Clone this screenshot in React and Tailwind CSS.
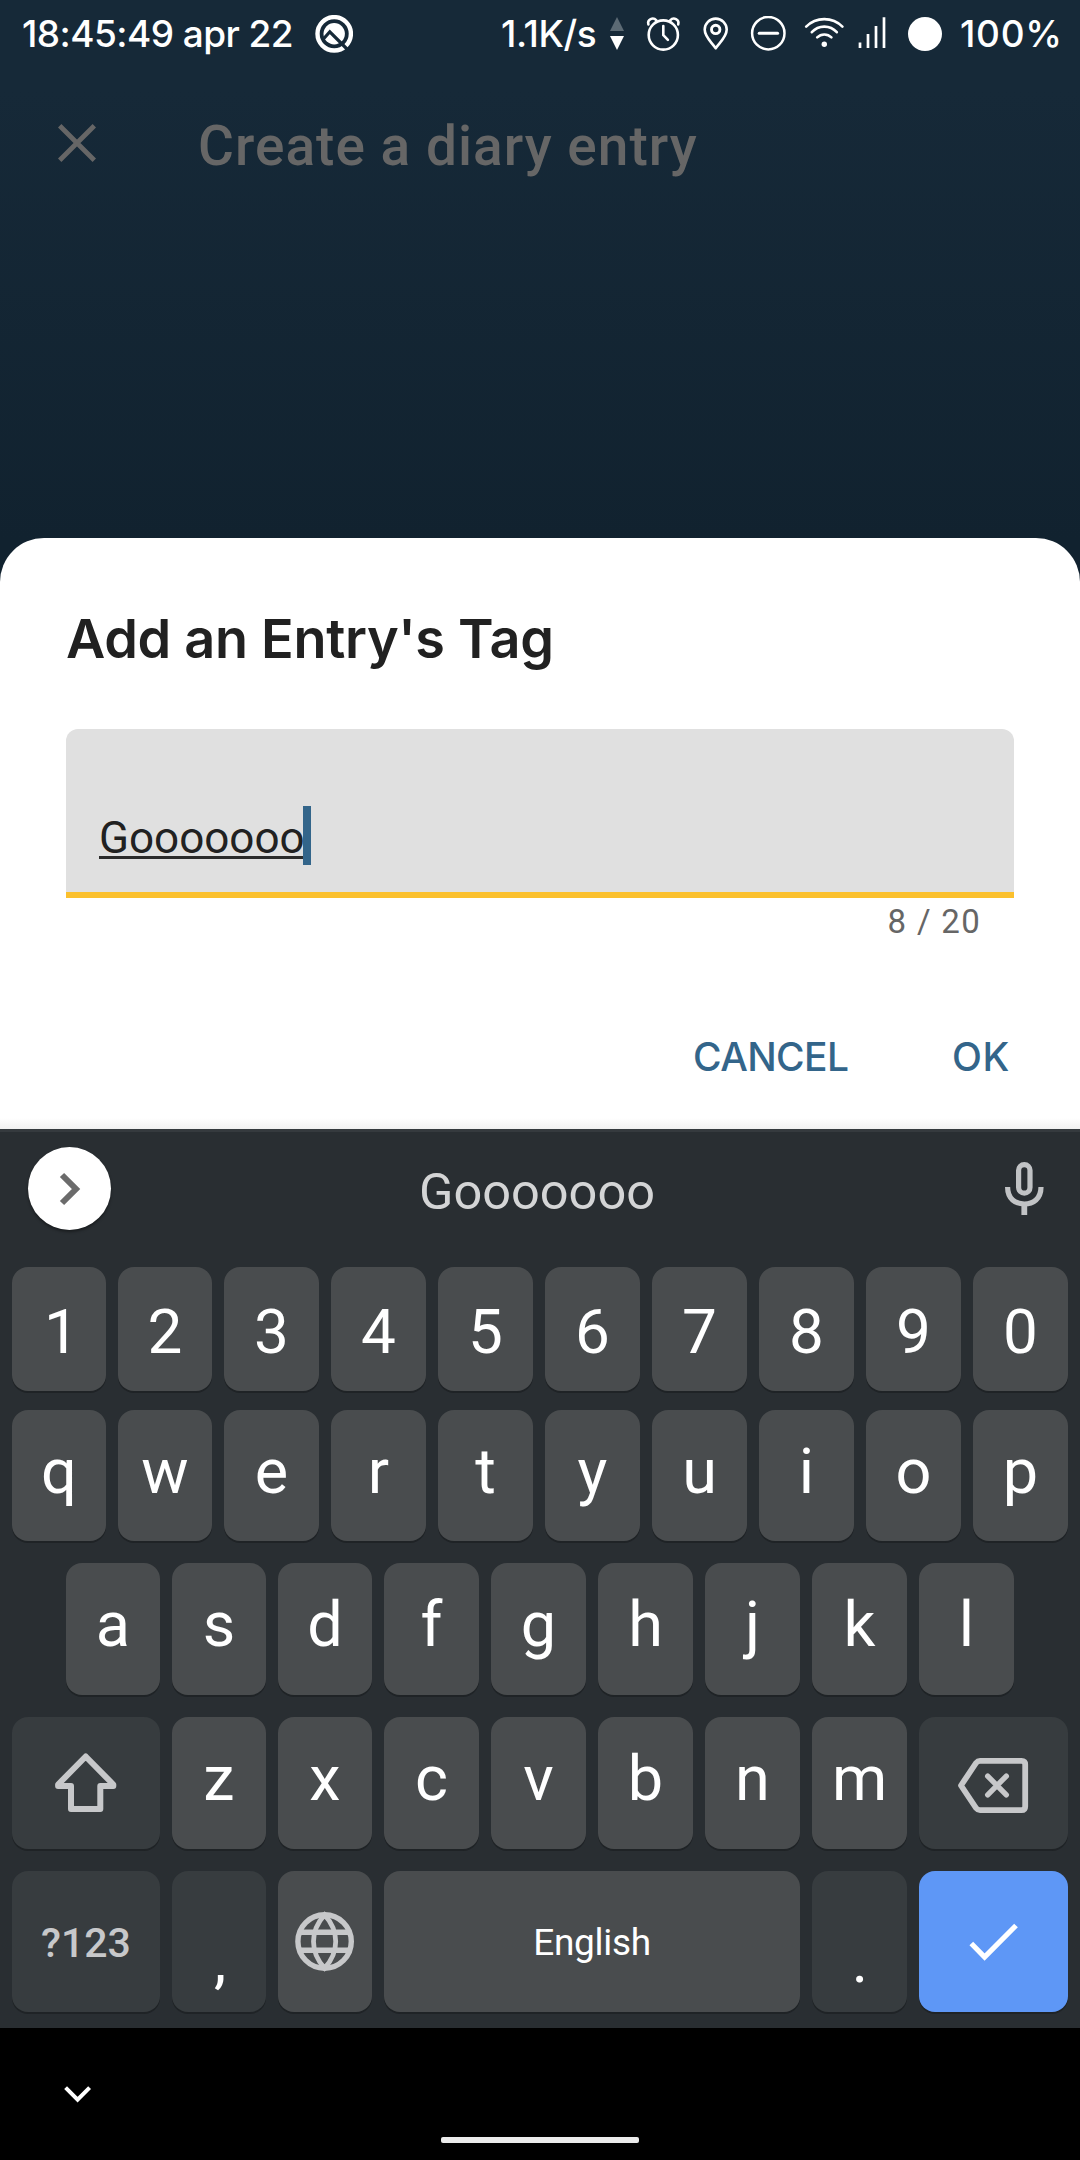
import React from "react";

const SANS = "font-['Inter',sans-serif]";

function Icon({ w, h, children, className = "", ...rest }) {
  return (
    <svg
      width={w}
      height={h}
      viewBox={`0 0 ${w} ${h}`}
      fill="none"
      stroke="currentColor"
      className={`shrink-0 ${className}`}
      {...rest}
    >
      {children}
    </svg>
  );
}

function StatusBar() {
  return (
    <div className={`flex h-[67px] items-center pl-[22px] text-[37px] leading-[44px] font-medium whitespace-nowrap text-white ${SANS}`}>
      <span className="w-[293px] tracking-[-0.55px]">18:45:49 apr 22</span>
      <Icon w={38} h={38}>
        <circle cx="19.2" cy="18.8" r="16.7" strokeWidth="4.4" />
        <circle cx="19.2" cy="18.8" r="10.7" fill="currentColor" stroke="none" />
        <path d="M8 24.5 L14.8 16.8 L34.5 36.5" stroke="#162938" strokeWidth="3.2" />
      </Icon>
      <span className="ml-[148px] w-[109px] tracking-[-0.4px]">1.1K/s</span>
      <Icon w={14} h={34} stroke="none" fill="currentColor">
        <path d="M7 0 L14 14 H0 Z" fill="#5c6a74" />
        <path d="M7 33 L0 19 H14 Z" />
      </Icon>
      <Icon w={36} h={38} strokeWidth="2.6" strokeLinecap="round" strokeLinejoin="round" className="ml-[21px]">
        <circle cx="18.3" cy="20" r="14.6" />
        <path d="M18.3 11 V20.2 L22.9 24.8" />
        <path d="M3.4 9.4 C2 4.4 8 1.6 11.4 5.4" />
        <path d="M33.2 9.4 C34.6 4.4 28.6 1.6 25.2 5.4" />
      </Icon>
      <Icon w={26} h={34} strokeWidth="2.6" strokeLinejoin="round" className="ml-[22px]">
        <path d="M12.7 31.3 C8.4 25 1.7 20 1.7 12.6 A11 11 0 0 1 23.7 12.6 C23.7 20 17 25 12.7 31.3 Z" />
        <circle cx="12.7" cy="12.4" r="4.2" strokeWidth="2.9" />
      </Icon>
      <Icon w={36} h={36} strokeWidth="2.5" className="ml-[21px]">
        <circle cx="18.3" cy="17.2" r="16.2" />
        <path d="M9.2 17.2 H27.6" strokeWidth="3" strokeLinecap="round" />
      </Icon>
      <Icon w={40} h={34} strokeWidth="2.6" strokeLinecap="round" className="ml-[18px]">
        <path d="M2.2 9.6 A25.6 25.6 0 0 1 38.4 9.6" />
        <path d="M7.8 15.2 A16.8 16.8 0 0 1 32.8 15.2" />
        <path d="M13.2 20.4 A10 10 0 0 1 27.4 20.4" />
        <circle cx="20.3" cy="27.2" r="2.7" fill="currentColor" stroke="none" />
      </Icon>
      <Icon w={28} h={34} strokeWidth="2.7" className="ml-[14px]">
        <path d="M2 31 V25.6 M10 31 V17 M18 31 V9 M26 31 V0.3" />
      </Icon>
      <span className="ml-[22px] size-[34px] shrink-0 rounded-full bg-white" />
      <span className="ml-[18px] tracking-[0.7px]">100%</span>
    </div>
  );
}

function AppBar() {
  return (
    <div className="flex h-[154px] items-start pl-[58px] text-[#666666]">
      <Icon w={38} h={38} strokeWidth="4.8" className="mt-[57px]">
        <path d="M1.7 1.7 L36.3 36.3 M36.3 1.7 L1.7 36.3" />
      </Icon>
      <h1 className="mt-[47px] ml-[102px] text-[55px] leading-[64px] font-medium tracking-[1.03px] whitespace-nowrap">
        Create a diary entry
      </h1>
    </div>
  );
}

function TagSheet() {
  return (
    <section className="flex h-[591px] flex-col rounded-t-[44px] bg-white bg-[linear-gradient(to_bottom,transparent_580px,#f1f1f1_591px)] px-[66px] pt-[69px]">
      <h2 className={`h-[64px] text-[54px] leading-[64px] font-semibold tracking-[-0.3px] whitespace-nowrap text-[#212121] ${SANS}`}>
        Add an Entry&apos;s Tag
      </h2>
      <div className="mt-[58px] flex h-[169px] rounded-t-[12px] border-b-[6px] border-[#fbc02d] bg-[#e0e0e0] pt-[77px] pl-[33px]">
        <span className="mt-[12px] h-[41px] w-[204px] border-b-[3px] border-[#2b2b2b] text-[44px] leading-[40px] whitespace-nowrap text-[#212121]">
          Gooooooo
        </span>
        <span className="h-[59px] w-[8px] bg-[#33658a]" />
      </div>
      <div className="mt-[4px] pr-[33px] text-right text-[33px] leading-[40px] tracking-[1.3px] text-[#666666]">8 / 20</div>
      <div className={`mt-[91px] flex text-[39px] leading-[48px] font-medium text-[#33658a] ${SANS}`}>
        <button className="ml-[627px] w-[259px] text-left tracking-[-0.6px]">CANCEL</button>
        <button className="text-left tracking-[0.5px]">OK</button>
      </div>
    </section>
  );
}

const KEY = "flex items-center justify-center rounded-[16px] shadow-[0_2px_0_#1f2326]";

function Key({ className = "", children, tone = "bg-[#494c4e] text-white", size = "w-[95px]" }) {
  return <div className={`${KEY} ${size} ${tone} ${className}`}>{children}</div>;
}

/* The leading keys of a row are one pixel narrower than the rest. */
function Letters({ chars, narrow, className }) {
  return [...chars].map((c, i) => (
    <Key key={c} size={i < narrow ? "w-[94px]" : "w-[95px]"} className={`${className} ${c === "1" ? "pl-[5px]" : ""}`}>
      {c}
    </Key>
  ));
}

const DARK = "bg-[#373c3f] text-[#c7c8ca]";

function Keyboard() {
  return (
    <section className="h-[899px] border-t-[3px] border-[#353a3e] bg-[#292e32]">
      <div className="flex h-[135px] items-start pl-[28px]">
        <div className="mt-[15px] size-[83px] rounded-full bg-white text-[#6b6b6b] shadow-[0_2px_3px_rgba(0,0,0,0.4)]">
          <Icon w={83} h={83} strokeWidth="6">
            <path d="M34 28 L48 42 L34 56" />
          </Icon>
        </div>
        <span className="mt-[30px] ml-[308px] w-[586px] text-[50.5px] leading-[60px] text-[#d4d5d6]">Gooooooo</span>
        <Icon w={39} h={54} strokeWidth="5.2" className="mt-[30px] text-[#c1c3c5]">
          <rect x="13.6" y="2.6" width="11.4" height="28.6" rx="5.7" />
          <path d="M2.6 25 C2.6 37 10.5 42 19.3 42 S36 37 36 25" />
          <path d="M19.3 41 V53" strokeWidth="5.8" />
        </Icon>
      </div>

      <div className="flex h-[124px] gap-[12px] px-[12px] text-[62px]">
        <Letters chars="1234567890" narrow={2} className="pt-[5px]" />
      </div>
      <div className="mt-[19px] flex h-[131px] gap-[12px] px-[12px] text-[63px]">
        <Letters chars="qwertyuiop" narrow={2} className="pb-[6px]" />
      </div>
      <div className="mt-[22px] flex h-[132px] gap-[12px] px-[66px] text-[63px]">
        <Letters chars="asdfghjkl" narrow={3} className="pb-[7px]" />
      </div>
      <div className="mt-[22px] flex h-[132px] gap-[12px] px-[12px] text-[63px]">
        <Key size="w-[148px]" tone={DARK}>
          <Icon w={148} h={132} strokeWidth="6" strokeLinejoin="round">
            <path d="M73.7 39.5 L101.3 67.5 V69 H88.3 V92 H59 V69 H46.1 V67.5 Z" />
          </Icon>
        </Key>
        <Letters chars="zxcvbnm" narrow={2} className="pb-[7px]" />
        <Key size="w-[149px]" tone={DARK}>
          <Icon w={149} h={132} strokeWidth="5.8" strokeLinejoin="round">
            <path d="M42 68.5 L57 46 Q58.8 43.8 61 43.8 H102.5 Q106.2 43.8 106.2 47.5 V89.5 Q106.2 93.2 102.5 93.2 H61 Q58.8 93.2 57 91 Z" />
            <path d="M68.7 59.2 L87.3 77.8 M87.3 59.2 L68.7 77.8" strokeLinecap="round" strokeWidth="5.4" />
          </Icon>
        </Key>
      </div>
      <div className="mt-[22px] flex h-[141px] gap-[12px] px-[12px] text-[62px]">
        <Key size="w-[148px]" tone={DARK} className="pt-[4px] text-[41px] font-medium">?123</Key>
        <Key size="w-[94px]" tone="bg-[#373c3f] text-white" className="pt-[38px] pl-[2px]">,</Key>
        <Key size="w-[94px]" tone="bg-[#494c4e] text-[#c7c8ca]">
          <Icon w={94} h={141} strokeWidth="5.4">
            <circle cx="46.6" cy="70.5" r="26.7" />
            <path d="M22 61.3 H71.2 M22 79.3 H71.2" />
            <path d="M46.6 43.8 C31.8 60 31.8 81 46.6 97.2 C61.4 81 61.4 60 46.6 43.8 Z" strokeWidth="4.8" />
          </Icon>
        </Key>
        <Key size="w-[416px]" className="pt-[3px] text-[37px] tracking-[-0.3px]">English</Key>
        <Key size="w-[95px]" tone="bg-[#373c3f] text-white" className="pt-[37px] pl-px">.</Key>
        <Key size="w-[149px]" tone="bg-[#5e97f6] text-white">
          <Icon w={149} h={141} strokeWidth="5.2">
            <path d="M52.3 72.5 L65.6 86 L97 54.5" />
          </Icon>
        </Key>
      </div>
    </section>
  );
}

function NavBar() {
  return (
    <div className="flex h-[132px] flex-col bg-black text-white">
      <Icon w={28} h={18} strokeWidth="4" className="mt-[58px] ml-[64px]">
        <path d="M1.6 1.6 L13.6 13.6 L25.6 1.6" />
      </Icon>
      <div className="mt-[33px] h-[6px] w-[198px] self-center rounded-[2px] bg-[#ebebeb]" />
    </div>
  );
}

export default function App() {
  return (
    <main className="h-[2160px] w-[1080px] overflow-hidden bg-[#11222f] bg-[linear-gradient(to_bottom,#162938_0,#162938_90px,#11222f_540px)] bg-no-repeat font-['Roboto',sans-serif]">
      <StatusBar />
      <AppBar />
      <div className="h-[317px]" />
      <TagSheet />
      <Keyboard />
      <NavBar />
    </main>
  );
}
